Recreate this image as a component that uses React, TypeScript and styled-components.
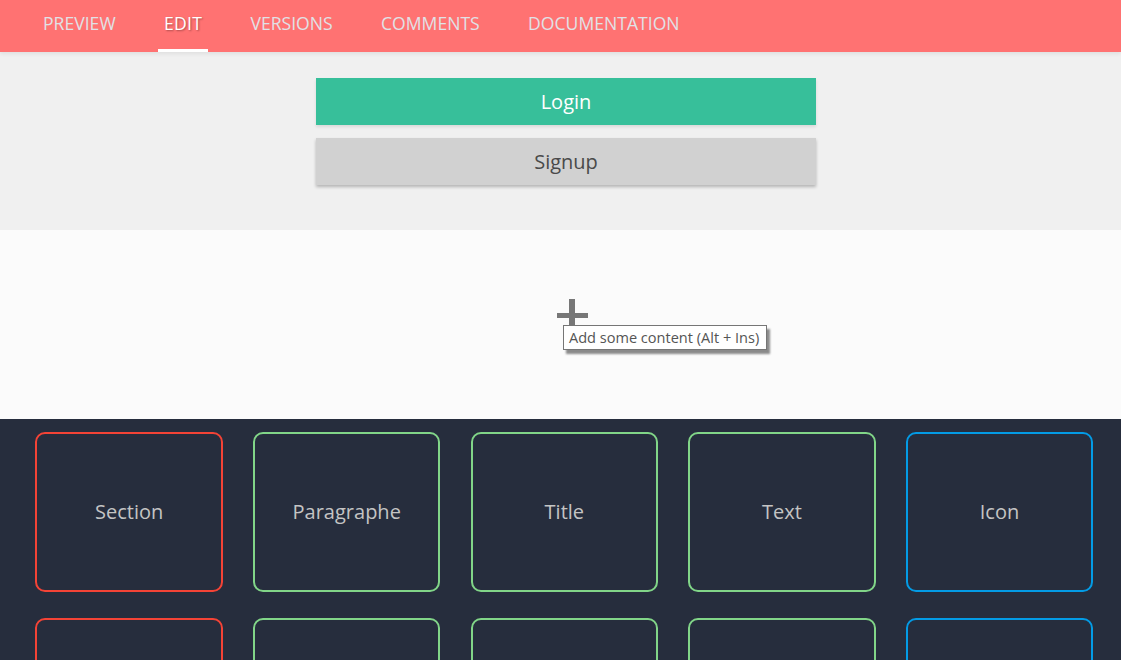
import React from "react";
import styled, { createGlobalStyle } from "styled-components";

const Global = createGlobalStyle`
  html, body { margin: 0; padding: 0; height: 100%; overflow: hidden; background: #262d3d; }
  body { font-family: "Open Sans", "Liberation Sans", sans-serif; }
`;

const Page = styled.div`
  width: 1121px;
  height: 660px;
  overflow: hidden;
  display: flex;
  flex-direction: column;
`;

const Header = styled.nav`
  position: relative;
  z-index: 1;
  flex: none;
  height: 52px;
  box-sizing: border-box;
  padding-left: 37px;
  display: flex;
  gap: 36.3px;
  background: #ff7272;
  box-shadow: 0 2px 4px rgba(0, 0, 0, 0.07);
`;

const Tab = styled.a<{ $active?: boolean }>`
  box-sizing: border-box;
  height: 52px;
  padding: 0 6px;
  line-height: 47px;
  font-size: 17.6px;
  white-space: nowrap;
  letter-spacing: ${(p) => (p.$active ? "0.25px" : "0")};
  color: ${(p) => (p.$active ? "#ffffff" : "#e1e1e6")};
  text-shadow: ${(p) => (p.$active ? "1px 1px 2px rgba(0,0,0,0.35)" : "none")};
  border-bottom: 3px solid ${(p) => (p.$active ? "#ffffff" : "transparent")};
`;

const AuthSection = styled.section`
  flex: none;
  height: 178px;
  box-sizing: border-box;
  padding: 26px 0 0 11px;
  background: #f0f0f0;
  display: flex;
  flex-direction: column;
  align-items: center;
  gap: 13px;
`;

const AuthButton = styled.button<{ $primary?: boolean }>`
  width: 500px;
  height: 47px;
  padding: 0;
  border: 0;
  font-family: inherit;
  font-size: 20px;
  color: ${(p) => (p.$primary ? "#ffffff" : "#4a4a4a")};
  background: ${(p) => (p.$primary ? "#37bf9a" : "#d1d1d1")};
  box-shadow: 0 2px 3px rgba(0, 0, 0, ${(p) => (p.$primary ? 0.1 : 0.25)});
`;

const EmptySection = styled.section`
  position: relative;
  flex: none;
  height: 189px;
  background: #fbfbfb;
`;

const PlusIcon = styled.svg`
  position: absolute;
  left: 557px;
  top: 69px;
  width: 31px;
  height: 31px;
  fill: #777777;
`;

const Tooltip = styled.div`
  position: absolute;
  left: 563px;
  top: 95px;
  box-sizing: border-box;
  height: 25px;
  width: 204px;
  border: 1px solid #767676;
  background: #ffffff;
  color: #555555;
  font-size: 14.55px;
  line-height: 23px;
  padding-left: 5px;
  white-space: nowrap;
  box-shadow: 3px 4px 2px rgba(0, 0, 0, 0.45);
`;

const Palette = styled.section`
  flex: 1;
  box-sizing: border-box;
  padding: 13px 27.75px 0 35.4px;
  background: #262d3d;
  display: grid;
  grid-template-columns: repeat(5, 1fr);
  grid-auto-rows: 160px;
  column-gap: 30.15px;
  row-gap: 26px;
`;

const Card = styled.div<{ $color: string }>`
  box-sizing: border-box;
  border: 2px solid ${(p) => p.$color};
  border-radius: 10px;
  padding-bottom: 2px;
  display: flex;
  align-items: center;
  justify-content: center;
  color: #c4c4c4;
  font-size: 20px;
`;

const red = "#f44336";
const green = "#81d588";
const blue = "#039be5";

const tabs = ["PREVIEW", "EDIT", "VERSIONS", "COMMENTS", "DOCUMENTATION"];
const cards: [string, string][] = [
  ["Section", red],
  ["Paragraphe", green],
  ["Title", green],
  ["Text", green],
  ["Icon", blue],
  ["", red],
  ["", green],
  ["", green],
  ["", green],
  ["", blue],
];

export default function App() {
  return (
    <Page>
      <Global />
      <Header>
        {tabs.map((t) => (
          <Tab key={t} $active={t === "EDIT"}>
            {t}
          </Tab>
        ))}
      </Header>
      <AuthSection>
        <AuthButton $primary>Login</AuthButton>
        <AuthButton>Signup</AuthButton>
      </AuthSection>
      <EmptySection>
        <PlusIcon viewBox="0 0 31 31">
          <rect x="12" y="0" width="6" height="31" />
          <rect x="0" y="14" width="31" height="5" />
        </PlusIcon>
        <Tooltip>Add some content (Alt + Ins)</Tooltip>
      </EmptySection>
      <Palette>
        {cards.map(([label, color], i) => (
          <Card key={i} $color={color}>
            {label}
          </Card>
        ))}
      </Palette>
    </Page>
  );
}
